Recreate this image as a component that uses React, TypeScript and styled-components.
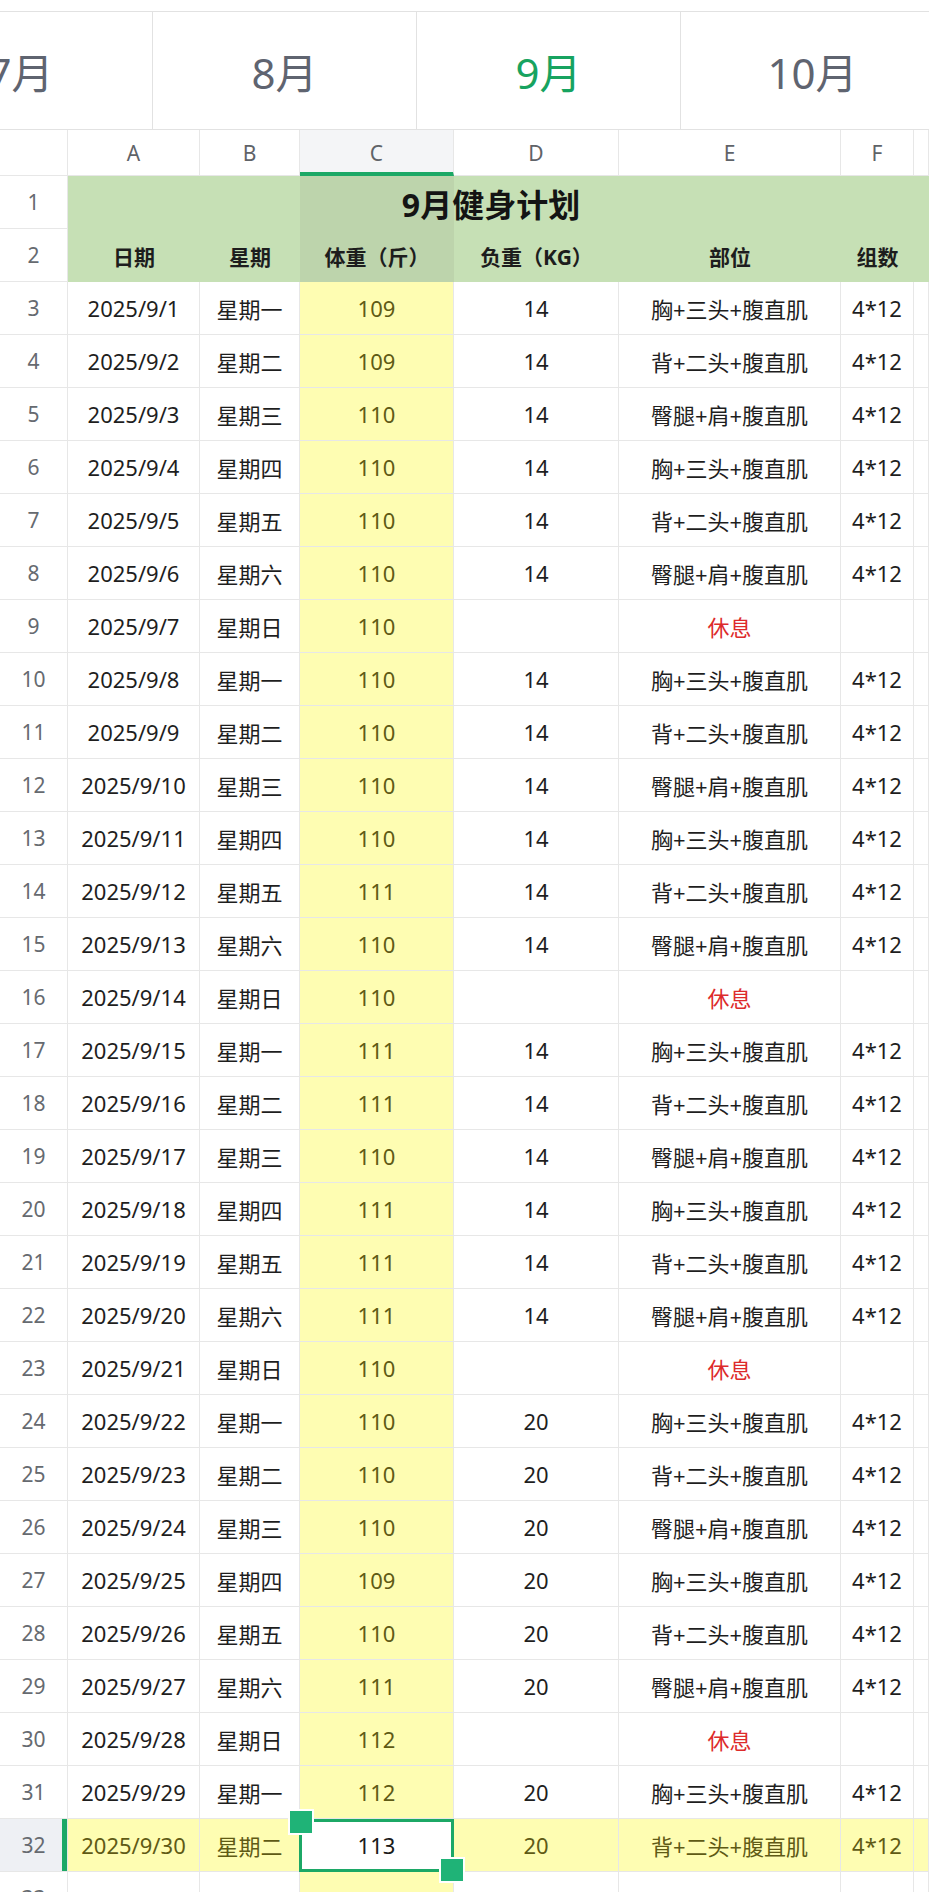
import React from "react";
import styled, { createGlobalStyle, css } from "styled-components";

const GlobalStyle = createGlobalStyle`
  html, body {
    margin: 0;
    padding: 0;
    background: #ffffff;
  }
  body {
    font-family: "Noto Sans", "Noto Sans CJK SC", sans-serif;
    color: #222222;
    overflow-x: hidden;
  }
`;

const GRID = "68px 132px 100px 154px 165px 222px 73px 1fr";
const GREEN = "#1ca866";
const YELLOW = "#fefdb2";
const OLIVE = "#5f5a15";
const LINE = "#e7e7e7";

const Page = styled.div`
  width: 929px;
  overflow: hidden;
  padding-top: 11px;
`;

const TabBar = styled.div`
  display: flex;
  height: 117px;
  margin-left: -111px;
  border-top: 1px solid #e2e2e2;
  border-bottom: 1px solid #e2e2e2;
`;

const Tab = styled.div<{ $active?: boolean }>`
  flex: 0 0 264px;
  box-sizing: border-box;
  border-right: 1px solid #e2e2e2;
  display: flex;
  align-items: center;
  justify-content: center;
  font-size: 42px;
  color: ${(p) => (p.$active ? "#17a360" : "#5f6470")};
`;

const Row = styled.div<{ $h: number }>`
  display: grid;
  grid-template-columns: ${GRID};
  height: ${(p) => p.$h}px;
`;

const HeaderBlock = styled.div`
  display: grid;
  grid-template-columns: ${GRID};
  grid-template-rows: 53px 53px;
`;

const ColHead = styled.div<{ $active?: boolean }>`
  box-sizing: border-box;
  display: flex;
  align-items: center;
  justify-content: center;
  font-size: 21px;
  color: #5f6368;
  border-right: 1px solid ${LINE};
  border-bottom: 1px solid ${LINE};
  ${(p) =>
    p.$active &&
    css`
      background: #f4f5f7;
      border-bottom: 4px solid ${GREEN};
      padding-top: 3px;
    `}
`;

const RowNum = styled.div<{ $active?: boolean; $row?: number }>`
  box-sizing: border-box;
  display: flex;
  align-items: center;
  justify-content: center;
  font-size: 21px;
  color: #666a70;
  border-right: 1px solid ${LINE};
  border-bottom: 1px solid ${LINE};
  ${(p) =>
    p.$row &&
    css`
      grid-column: 1;
      grid-row: ${p.$row};
    `}
  ${(p) =>
    p.$active &&
    css`
      background: #eef0f4;
      box-shadow: inset -5px 0 0 ${GREEN};
    `}
`;

const GreenCell = styled.div<{ $band?: boolean; $row: number; $col: number }>`
  grid-row: ${(p) => p.$row};
  grid-column: ${(p) => p.$col};
  background: ${(p) => (p.$band ? "#bdd4ac" : "#c6e0b5")};
  display: flex;
  align-items: center;
  justify-content: center;
  font-size: 21px;
  font-weight: 700;
  color: #1d1d1d;
  white-space: nowrap;
`;

const Title = styled.div`
  grid-column: 2 / 8;
  grid-row: 1;
  display: flex;
  align-items: center;
  justify-content: center;
  font-size: 32px;
  font-weight: 700;
  color: #141414;
  z-index: 1;
`;

const Cell = styled.div<{ $band?: boolean; $hl?: boolean; $rest?: boolean; $sel?: boolean }>`
  box-sizing: border-box;
  position: relative;
  display: flex;
  align-items: center;
  justify-content: center;
  font-size: 22px;
  color: #1e1e1e;
  border-right: 1px solid ${LINE};
  border-bottom: 1px solid ${LINE};
  white-space: nowrap;
  ${(p) => (p.$band || p.$hl) && css`
    background: ${YELLOW};
    color: ${OLIVE};
  `}
  ${(p) => p.$rest && css`
    color: #dd2b2b;
  `}
  ${(p) => p.$sel && css`
    background: #ffffff;
    color: #1a1a1a;
    z-index: 3;
  `}
`;

const Selection = styled.span`
  position: absolute;
  top: 0;
  left: -1px;
  right: -1px;
  bottom: -1px;
  border: 3px solid ${GREEN};
  pointer-events: none;
`;

const Handle = styled.span<{ $corner: "tl" | "br" }>`
  position: absolute;
  width: 22px;
  height: 22px;
  background: #1fb377;
  border: 2px solid #ffffff;
  ${(p) =>
    p.$corner === "tl"
      ? css`
          top: -13px;
          left: -14px;
        `
      : css`
          bottom: -14px;
          right: -14px;
        `}
`;

type Day = [string, string, string, string];

const CHEST = "胸+三头+腹直肌";
const BACK = "背+二头+腹直肌";
const LEGS = "臀腿+肩+腹直肌";
const REST = "休息";

const weeks = ["一", "二", "三", "四", "五", "六", "日"];
const plan = [CHEST, BACK, LEGS, CHEST, BACK, LEGS, REST];
const weights = [
  "109", "109", "110", "110", "110", "110", "110",
  "110", "110", "110", "110", "111", "110", "110",
  "111", "111", "110", "111", "111", "111", "110",
  "110", "110", "110", "109", "110", "111", "112",
  "112", "113",
];

const days: Day[] = weights.map((w, i) => {
  const wk = weeks[i % 7];
  const part = plan[i % 7];
  const load = part === REST ? "" : i >= 21 ? "20" : "14";
  return [`2025/9/${i + 1}`, `星期${wk}`, w, load];
});

const columns = ["A", "B", "C", "D", "E", "F", ""];
const labels = ["日期", "星期", "体重（斤）", "负重（KG）", "部位", "组数", ""];

export default function App() {
  return (
    <Page>
      <GlobalStyle />
      <TabBar>
        <Tab>7月</Tab>
        <Tab>8月</Tab>
        <Tab $active>9月</Tab>
        <Tab>10月</Tab>
      </TabBar>

      <Row $h={46}>
        <ColHead />
        {columns.map((c, i) => (
          <ColHead key={i} $active={c === "C"}>
            {c}
          </ColHead>
        ))}
      </Row>

      <HeaderBlock>
        <RowNum $row={1}>1</RowNum>
        {columns.map((c, i) => (
          <GreenCell key={"t" + i} $band={c === "C"} $row={1} $col={i + 2} />
        ))}
        <Title>9月健身计划</Title>
        <RowNum $row={2}>2</RowNum>
        {labels.map((l, i) => (
          <GreenCell key={"l" + i} $band={columns[i] === "C"} $row={2} $col={i + 2}>
            {l}
          </GreenCell>
        ))}
      </HeaderBlock>

      {days.map((d, i) => {
        const n = i + 3;
        const hl = n === 32;
        const part = plan[i % 7];
        const rest = part === REST;
        return (
          <Row $h={53} key={n}>
            <RowNum $active={hl}>{n}</RowNum>
            <Cell $hl={hl}>{d[0]}</Cell>
            <Cell $hl={hl}>{d[1]}</Cell>
            <Cell $band $sel={hl}>
              {d[2]}
              {hl && (
                <Selection>
                  <Handle $corner="tl" />
                  <Handle $corner="br" />
                </Selection>
              )}
            </Cell>
            <Cell $hl={hl}>{d[3]}</Cell>
            <Cell $hl={hl} $rest={rest}>{part}</Cell>
            <Cell $hl={hl}>{rest ? "" : "4*12"}</Cell>
            <Cell $hl={hl} />
          </Row>
        );
      })}

      {[33, 34].map((n) => (
        <Row $h={53} key={n}>
          <RowNum>{n}</RowNum>
          <Cell />
          <Cell />
          <Cell $band />
          <Cell />
          <Cell />
          <Cell />
          <Cell />
        </Row>
      ))}
    </Page>
  );
}
